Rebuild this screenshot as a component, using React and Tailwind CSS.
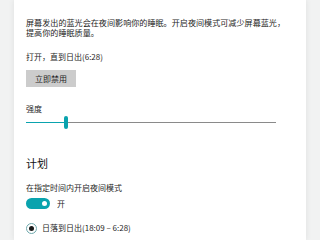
import React, { useState } from "react";

const font = { fontFamily: '"Noto Sans CJK SC", "Noto Sans", sans-serif' };

const App = () => {
  const [on, setOn] = useState(true);
  const [level] = useState(15);

  return (
    <div className="w-[320px] h-[240px] overflow-hidden bg-[#f1f2f2] flex" style={font}>
      <div className="ml-[14px] w-[292px] h-full bg-white shadow-[0_0_6px_rgba(0,0,0,0.08)] pl-[12px] pr-[14px] text-[#1e1e1e]">
        <p className="mt-[18px] text-[8.1px] leading-[10px] whitespace-nowrap">
          屏幕发出的蓝光会在夜间影响你的睡眠。开启夜间模式可减少屏幕蓝光，
          <br />
          提高你的睡眠质量。
        </p>

        <p className="mt-[14px] text-[8px] leading-[10px]">打开，直到日出(6:28)</p>

        <button className="mt-[8px] w-[50px] h-[17px] bg-[#cccccc] text-[8px] leading-[17px] text-[#1e1e1e]">
          立即禁用
        </button>

        <p className="mt-[17px] text-[8px] leading-[10px]">强度</p>

        <div className="mt-[1px] w-[250px] h-[14px] flex items-center">
          <div className="h-[1px] bg-[#0aa3ae]" style={{ width: `${level}%` }} />
          <div className="w-[4px] h-[13px] rounded-full bg-[#0aa3ae]" />
          <div className="flex-1 h-[1px] bg-[#8a8a8a]" />
        </div>

        <h2 className="mt-[27px] text-[11px] leading-[14px] text-[#111]">计划</h2>

        <p className="mt-[13px] text-[8px] leading-[10px]">在指定时间内开启夜间模式</p>

        <div className="mt-[5px] flex items-center gap-[7px]">
          <button
            onClick={() => setOn(!on)}
            className="w-[24px] h-[11px] rounded-full bg-[#0aa3ae] flex items-center justify-end pr-[3px]"
          >
            <span className="w-[5px] h-[5px] rounded-full bg-white" />
          </button>
          <span className="text-[8px] leading-[10px]">{on ? "开" : "关"}</span>
        </div>

        <div className="mt-[13px] flex items-center gap-[5px]">
          <span className="w-[11px] h-[11px] rounded-full border border-[#6fa9ad] flex items-center justify-center">
            <span className="w-[5px] h-[5px] rounded-full bg-[#1a1a1a]" />
          </span>
          <span className="text-[8px] leading-[12px]">日落到日出(18:09 – 6:28)</span>
        </div>
      </div>
    </div>
  );
};

export default App;
